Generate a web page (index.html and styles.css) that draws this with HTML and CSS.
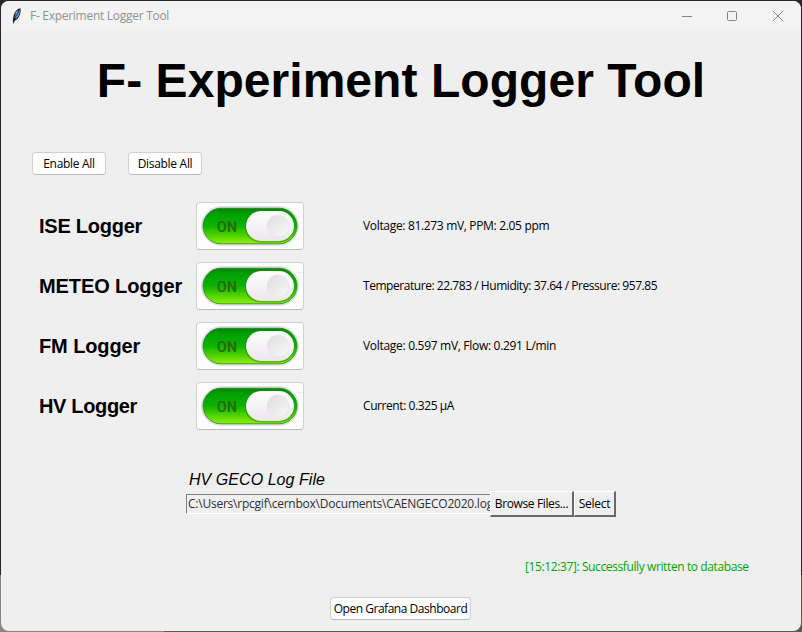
FILE: index.html
```html
<!DOCTYPE html>
<html lang="en">
<head>
<meta charset="utf-8">
<title>F- Experiment Logger Tool</title>
<link rel="stylesheet" href="styles.css">
</head>
<body>
<svg class="defs" width="0" height="0" aria-hidden="true">
  <defs>
    <linearGradient id="track" x1="0" y1="0" x2="0" y2="1">
      <stop offset="0" stop-color="#087f08"/>
      <stop offset=".16" stop-color="#02a002"/>
      <stop offset=".5" stop-color="#0cb202"/>
      <stop offset="1" stop-color="#8ef000"/>
    </linearGradient>
    <linearGradient id="knob" x1="0" y1="0" x2="0" y2="1">
      <stop offset="0" stop-color="#ffffff"/>
      <stop offset="1" stop-color="#ebe7eb"/>
    </linearGradient>
    <linearGradient id="dimple" x1="0" y1="0" x2="1" y2="1">
      <stop offset="0" stop-color="#dddbdd"/>
      <stop offset="1" stop-color="#fbfafb"/>
    </linearGradient>
    <symbol id="switch" viewBox="0 0 98 40">
      <rect x=".5" y=".8" width="97" height="38.4" rx="19.2" fill="#eee7ee" stroke="#ded8de"/>
      <rect x="2" y="2.2" width="94" height="35.6" rx="17.8" fill="url(#track)" stroke="#16881a" stroke-width=".8"/>
      <rect x="44" y="6.5" width="49.5" height="30" rx="15" fill="#176e0b" opacity=".4"/>
      <rect x="45" y="5" width="48" height="30" rx="15" fill="url(#knob)"/>
      <circle cx="77" cy="20" r="11" fill="url(#dimple)" stroke="#e6e3e6" stroke-width=".6"/>
    </symbol>
  </defs>
</svg>
<div class="window">
  <header class="titlebar">
    <svg class="feather" width="12" height="18" viewBox="0 0 12 18">
      <path d="M2 16C1.800 13 2 8 4.500 4.500 6 2.200 8.200 1.200 9.500 1.200 10 4 9.400 7.500 7.500 10.500 6.400 12.200 5 13.200 3.500 13.500Z" fill="#15191f"/>
      <path d="M3.500 11.500C3.500 8.500 5 5 8.700 2.300 9.200 5.500 8.200 9 5.500 11.500Z" fill="#5b9be0"/>
      <path d="M2.500 16.500 4 11 8.300 3" fill="none" stroke="#15191f" stroke-width=".8"/>
      <path d="M4.500 7 6.500 3.500" stroke="#b3c4d6" stroke-width=".8"/>
    </svg>
    <span class="caption">F- Experiment Logger Tool</span>
    <svg class="controls" width="104" height="12" viewBox="0 0 104 12" fill="none" stroke="#858585">
      <path d="M0 6.500H10"/>
      <rect x="45.500" y="1.500" width="9" height="9" rx="1"/>
      <path d="M91 1 101 11M101 1 91 11"/>
    </svg>
  </header>
  <main>
    <h1>F- Experiment Logger Tool</h1>
    <div class="bulk">
      <button class="btn">Enable All</button>
      <button class="btn">Disable All</button>
    </div>
    <section class="loggers">
      <div class="row ise"><h2>ISE Logger</h2><button class="toggle"><svg width="98" height="40"><use href="#switch"/></svg><span>ON</span></button><p>Voltage: 81.273 mV, PPM: 2.05 ppm</p></div>
      <div class="row meteo"><h2>METEO Logger</h2><button class="toggle"><svg width="98" height="40"><use href="#switch"/></svg><span>ON</span></button><p>Temperature: 22.783 / Humidity: 37.64 / Pressure: 957.85</p></div>
      <div class="row fm"><h2>FM Logger</h2><button class="toggle"><svg width="98" height="40"><use href="#switch"/></svg><span>ON</span></button><p>Voltage: 0.597 mV, Flow: 0.291 L/min</p></div>
      <div class="row hv"><h2>HV Logger</h2><button class="toggle"><svg width="98" height="40"><use href="#switch"/></svg><span>ON</span></button><p>Current: 0.325 µA</p></div>
    </section>
    <section class="file">
      <h3>HV GECO Log File</h3>
      <div class="picker">
        <div class="path">C:\Users\rpcgif\cernbox\Documents\CAENGECO2020.log</div>
        <button class="classic browse">Browse Files...</button>
        <button class="classic select">Select</button>
      </div>
    </section>
    <p class="status">[15:12:37]: Successfully written to database</p>
    <button class="btn dashboard">Open Grafana Dashboard</button>
  </main>
</div>
</body>
</html>
```
FILE: styles.css
```css
* { box-sizing: border-box; }
body {
  margin: 0;
  width: 802px;
  height: 632px;
  padding: 1px;
  overflow: hidden;
  background: linear-gradient(90deg, #858585 164px, #50634f 164px) bottom / 100% 57px no-repeat, #29272a;
  font: 12px/16px "Open Sans", "Noto Sans", sans-serif;
  letter-spacing: -.3px;
  color: #000;
  white-space: nowrap;
}
h1, h2, h3, p { margin: 0; }
button { font: inherit; letter-spacing: inherit; color: inherit; padding: 0; }
.defs { position: absolute; }
.window {
  height: 630px;
  border-radius: 8px;
  background: #efefef;
  overflow: hidden;
}
.titlebar {
  height: 30px;
  background: #f3f3f3;
  display: flex;
  align-items: center;
  padding-left: 10px;
  color: #929292;
}
.caption { margin-left: 7px; letter-spacing: -.28px; }
.controls { margin-left: auto; margin-right: 15px; }
main { display: flex; flex-direction: column; }
h1 {
  height: 100px;
  text-align: center;
  font: bold 48px/100px "Liberation Sans", Arial, sans-serif;
  letter-spacing: .05px;
}
.bulk { display: flex; gap: 22px; margin: 21px 0 0 31px; }
.btn {
  width: 74px;
  height: 23px;
  border: 1px solid #d0d0d0;
  border-bottom-color: #bcbcbc;
  border-radius: 4px;
  background: #fdfdfd;
}
.loggers { display: grid; gap: 12px; margin: 27px 0 0 38px; }
.row {
  display: grid;
  grid-template-columns: 157px 167px 1fr;
  align-items: center;
  height: 48px;
}
h2 {
  font: bold 20px/24px "Liberation Sans", Arial, sans-serif;
  letter-spacing: -.1px;
}
.ise h2 { letter-spacing: -.25px; }
.hv h2 { letter-spacing: -.35px; }
.ise p { letter-spacing: -.33px; }
.meteo p { letter-spacing: -.45px; }
.hv p { letter-spacing: -.42px; }
.toggle {
  position: relative;
  width: 108px;
  height: 48px;
  border: 1px solid #d0d0d0;
  border-bottom-color: #bcbcbc;
  border-radius: 4px;
  background: #fdfdfd;
}
.toggle svg { display: block; margin: 0 0 0 4px; }
.toggle span {
  position: absolute;
  left: 20px;
  top: 15px;
  font: 500 14px/18px Roboto, sans-serif;
  letter-spacing: .4px;
  color: #28690a;
  -webkit-text-stroke: .15px #28690a;
}
.file { margin: 40px 0 0 185px; }
h3 {
  padding-left: 3px;
  font: italic 16px/20px "Liberation Sans", Arial, sans-serif;
  letter-spacing: .05px;
}
.picker { display: flex; align-items: center; margin-top: 1px; }
.path {
  width: 304px;
  height: 20px;
  line-height: 18px;
  padding-left: 1px;
  overflow: hidden;
  border: 1px solid #fff;
  border-top-color: #808080;
  border-left-color: #808080;
  border-right: 0;
  letter-spacing: -.23px;
  color: #303030;
}
.classic {
  height: 26px;
  background: #efefef;
  border: 1px solid #fff;
  border-right: 2px solid #696969;
  border-bottom: 2px solid #696969;
}
.browse { width: 84px; letter-spacing: -.37px; }
.select { width: 42px; }
.status { margin: 42px 0 0 524px; color: #00a800; letter-spacing: -.39px; }
.dashboard { width: 141px; margin: 22px 0 0 329px; letter-spacing: -.47px; }
```
